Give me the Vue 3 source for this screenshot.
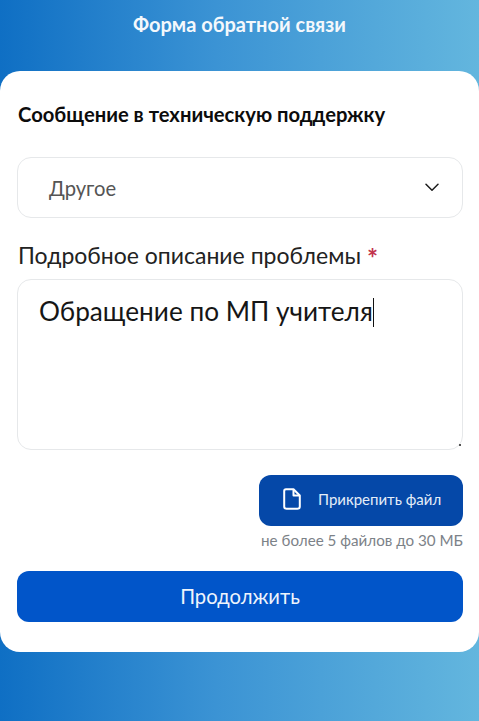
<template>
  <div class="page">
    <header class="top-title">Форма обратной связи</header>

    <main class="card">
      <h1 class="card-title">Сообщение в техническую поддержку</h1>

      <div class="select-box">
        <span>{{ topic }}</span>
        <svg class="chevron" width="14" height="9" viewBox="0 0 14 9" fill="none">
          <path d="M1 1.2L7 7.2L13 1.2" stroke="#1c1c1c" stroke-width="1.5" stroke-linecap="round" stroke-linejoin="round" />
        </svg>
      </div>

      <div class="field-label">Подробное описание проблемы <span class="required">*</span></div>

      <div class="text-box">
        <span>{{ message }}</span><span class="caret"></span>
        <i class="grip"></i>
      </div>

      <div class="attach">
        <button class="attach-btn" type="button">
          <svg width="18" height="22" viewBox="0 0 18 22" fill="none">
            <path d="M3 1.2H10.5L16.8 7.5V18.5C16.8 19.8 15.8 20.8 14.5 20.8H3.5C2.2 20.8 1.2 19.8 1.2 18.5V3C1.2 2 2 1.2 3 1.2Z" stroke="#fff" stroke-width="2" stroke-linejoin="round" />
            <path d="M10.5 1.5V7.5H16.5" stroke="#fff" stroke-width="2" stroke-linejoin="round" />
          </svg>
          <span>Прикрепить файл</span>
        </button>
        <div class="attach-hint">не более 5 файлов до 30 МБ</div>
      </div>

      <button class="submit-btn" type="button">Продолжить</button>
    </main>
  </div>
</template>

<script setup>
import { ref } from 'vue'

const topic = ref('Другое')
const message = ref('Обращение по МП учителя')
</script>

<style>
html,
body {
  margin: 0;
}
</style>

<style scoped>
.page {
  width: 479px;
  height: 721px;
  box-sizing: border-box;
  overflow: hidden;
  background: linear-gradient(90deg, #0f6fc4 0%, #3b93d4 45%, #63b6de 100%);
  font-family: Lato, "Noto Sans", sans-serif;
  color: #111;
}

.top-title {
  height: 71px;
  padding-top: 12px;
  box-sizing: border-box;
  text-align: center;
  color: #f4f8fc;
  font-size: 20px;
  font-weight: 700;
  line-height: 24px;
}

.card {
  height: 581px;
  box-sizing: border-box;
  padding: 31px 16px 0 17px;
  background: #fff;
  border-radius: 20px;
}

.card-title {
  margin: 0 0 30px 1px;
  font-size: 20.2px;
  font-weight: 700;
  line-height: 25px;
  color: #0c0c0c;
}

.select-box {
  height: 61px;
  box-sizing: border-box;
  padding: 0 23px 0 31px;
  display: flex;
  align-items: center;
  justify-content: space-between;
  border: 1px solid #e6e8ea;
  border-radius: 14px;
  background: #fff;
  font-size: 20.2px;
  color: #555;
}

.field-label {
  margin: 23px 0 10px 1px;
  font-size: 23px;
  line-height: 28px;
  color: #222;
}

.required {
  color: #c2334d;
  font-weight: 700;
  font-size: 26px;
  line-height: 20px;
  vertical-align: -4px;
}

.text-box {
  position: relative;
  height: 171px;
  box-sizing: border-box;
  padding: 13px 21px;
  border: 1px solid #e6e8ea;
  border-radius: 14px;
  background: #fff;
  font-size: 26.2px;
  line-height: 36px;
  color: #161616;
}

.caret {
  display: inline-block;
  width: 1.5px;
  height: 29px;
  margin-left: 0;
  vertical-align: -6px;
  background: #111;
}

.grip {
  position: absolute;
  right: 1px;
  bottom: 3px;
  width: 2px;
  height: 2px;
  background: #555;
}

.attach {
  margin-top: 25px;
  display: flex;
  flex-direction: column;
  align-items: flex-end;
}

.attach-btn {
  width: 204px;
  height: 51px;
  padding: 0 0 3px 24px;
  display: flex;
  align-items: center;
  gap: 17px;
  border: none;
  border-radius: 12px;
  background: #0548a8;
  color: #e4edf8;
  font-family: inherit;
  font-size: 15px;
}

.attach-hint {
  margin-top: 5px;
  font-size: 15.2px;
  line-height: 19px;
  color: #7c8288;
}

.submit-btn {
  display: block;
  width: 100%;
  height: 51px;
  margin-top: 21px;
  padding: 0 0 2px;
  border: none;
  border-radius: 12px;
  background: #0155c9;
  color: #eef4fc;
  font-family: inherit;
  font-size: 20.2px;
}
</style>
